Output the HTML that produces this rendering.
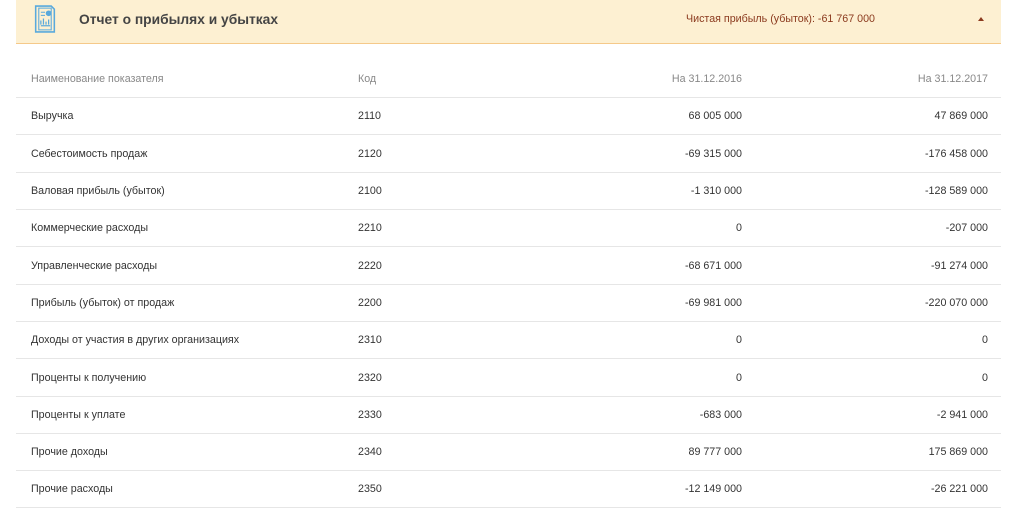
<!DOCTYPE html>
<html><head><meta charset="utf-8"><style>
body{margin:0;background:#fff;font-family:"Liberation Sans","DejaVu Sans",sans-serif;width:1024px;height:503px;overflow:hidden;position:relative}
.hdr{position:absolute;left:16px;top:0;width:985px;height:43px;background:#fdf0d2;border-bottom:1.5px solid #f5c98a}
.title{position:absolute;left:63px;top:12px;font-size:13.8px;font-weight:bold;color:#444}
.net{position:absolute;left:670px;top:13px;font-size:10.7px;color:#8b3a1e}
.tri{position:absolute;left:962px;top:17px;width:0;height:0;border-left:3.5px solid transparent;border-right:3.5px solid transparent;border-bottom:4px solid #8b3a1e}
.row{position:absolute;left:16px;width:985px;height:37px;border-bottom:1px solid #e6e6e6;font-size:10.7px;color:#333}
.row span{position:absolute;top:13px;white-space:nowrap}
.c1{left:15px}.c2{left:342px}.c3{right:259px}.c4{right:13px}
.th{color:#888}
</style></head><body>
<div class="hdr">
<svg style="position:absolute;left:17px;top:5px" width="24" height="29" viewBox="0 0 22 28" fill="none" stroke="#5aa9dc" stroke-width="1.5"><path d="M2 1h15l3 3v22H2z"/><path d="M5 3h12v21H5z" stroke-width="1"/><circle cx="14.5" cy="8" r="2" fill="#5aa9dc"/><path d="M7 7h4M7 10h4" stroke-width="1"/><path d="M7 19v-4M9.5 19v-6M12 19v-3M14.5 19v-5M7 20h9" stroke-width="1.2"/></svg>
<div class="title">Отчет о прибылях и убытках</div>
<div class="net">Чистая прибыль (убыток): -61 767 000</div>
<div class="tri"></div>
</div>
<div class="row th" style="top:60px"><span class="c1">Наименование показателя</span><span class="c2">Код</span><span class="c3">На 31.12.2016</span><span class="c4">На 31.12.2017</span></div>
<div class="row" style="top:97px"><span class="c1">Выручка</span><span class="c2">2110</span><span class="c3">68 005 000</span><span class="c4">47 869 000</span></div>
<div class="row" style="top:135px"><span class="c1">Себестоимость продаж</span><span class="c2">2120</span><span class="c3">-69 315 000</span><span class="c4">-176 458 000</span></div>
<div class="row" style="top:172px"><span class="c1">Валовая прибыль (убыток)</span><span class="c2">2100</span><span class="c3">-1 310 000</span><span class="c4">-128 589 000</span></div>
<div class="row" style="top:209px"><span class="c1">Коммерческие расходы</span><span class="c2">2210</span><span class="c3">0</span><span class="c4">-207 000</span></div>
<div class="row" style="top:247px"><span class="c1">Управленческие расходы</span><span class="c2">2220</span><span class="c3">-68 671 000</span><span class="c4">-91 274 000</span></div>
<div class="row" style="top:284px"><span class="c1">Прибыль (убыток) от продаж</span><span class="c2">2200</span><span class="c3">-69 981 000</span><span class="c4">-220 070 000</span></div>
<div class="row" style="top:321px"><span class="c1">Доходы от участия в других организациях</span><span class="c2">2310</span><span class="c3">0</span><span class="c4">0</span></div>
<div class="row" style="top:359px"><span class="c1">Проценты к получению</span><span class="c2">2320</span><span class="c3">0</span><span class="c4">0</span></div>
<div class="row" style="top:396px"><span class="c1">Проценты к уплате</span><span class="c2">2330</span><span class="c3">-683 000</span><span class="c4">-2 941 000</span></div>
<div class="row" style="top:433px"><span class="c1">Прочие доходы</span><span class="c2">2340</span><span class="c3">89 777 000</span><span class="c4">175 869 000</span></div>
<div class="row" style="top:470px"><span class="c1">Прочие расходы</span><span class="c2">2350</span><span class="c3">-12 149 000</span><span class="c4">-26 221 000</span></div>
</body></html>
